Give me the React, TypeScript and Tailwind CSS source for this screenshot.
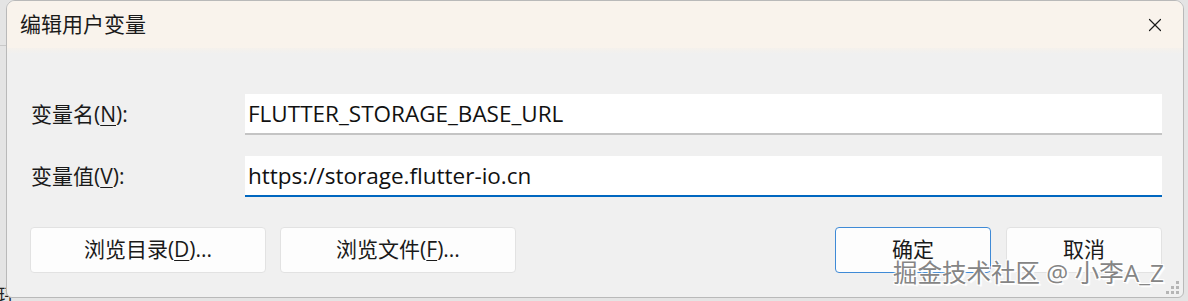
import { X } from 'lucide-react'

const font = '"Open Sans", "Noto Sans CJK SC", sans-serif'

function Field({ label, mnemonic, value, focused }: { label: string; mnemonic: string; value: string; focused?: boolean }) {
  return (
    <div className="flex items-center">
      <div className="w-[215px] text-[21px] text-[#1a1a1a] pl-[1px]">
        {label}(<span className="underline underline-offset-[3px] decoration-1">{mnemonic}</span>):
      </div>
      <div
        className={
          'flex-1 h-[41px] bg-white flex items-center pl-[3px] text-[22.5px] text-[#111] ' +
          (focused ? 'border-b-2 border-[#0067c0]' : 'border-b-2 border-[#c4c4c4]')
        }
      >
        {value}
      </div>
    </div>
  )
}

function Btn({ children, w, primary }: { children: React.ReactNode; w: string; primary?: boolean }) {
  return (
    <button
      className={
        'h-[46px] rounded-[4px] bg-[#fdfdfd] text-[21px] text-[#1a1a1a] flex items-center justify-center ' +
        w +
        (primary ? ' border border-[#3f8ad6]' : ' border border-[#e2e2e2]')
      }
    >
      {children}
    </button>
  )
}

export default function App() {
  return (
    <div className="w-[1188px] h-[301px] bg-[#e4e4e4] relative overflow-hidden" style={{ fontFamily: font }}>
      <div className="absolute left-0 top-[45px] w-[7px] h-px bg-[#c9c9c9]" />
      <div className="absolute left-[-2px] top-[286px] text-[18px] leading-none text-[#222]">玶</div>
      <div className="ml-[6px] w-[1178px] h-[298px] rounded-t-[9px] rounded-b-[6px] border border-[#b9b9b9] bg-[#f0f0f0] flex flex-col overflow-hidden relative">
        <div className="h-[47px] bg-[#f9f3ec] flex items-center justify-between pl-[13px] pr-[17px] shrink-0">
          <span className="text-[21px] text-[#1a1a1a] pt-[1px]">编辑用户变量</span>
          <X className="w-[22px] h-[22px] text-[#1c1c1c]" strokeWidth={1.3} />
        </div>
        <div className="h-[6px] bg-gradient-to-b from-[#f5f1ec] to-[#f0f0f0]" />
        <div className="flex flex-col gap-[21px] pl-[23px] pr-[21px] pt-[40px]">
          <Field label="变量名" mnemonic="N" value="FLUTTER_STORAGE_BASE_URL" />
          <Field label="变量值" mnemonic="V" value="https://storage.flutter-io.cn" focused />
        </div>
        <div className="flex items-center pl-[23px] pr-[21px] pt-[30px]">
          <div className="flex gap-[14px]">
            <Btn w="w-[236px]">
              浏览目录(<span className="underline underline-offset-[3px] decoration-1">D</span>)...
            </Btn>
            <Btn w="w-[236px]">
              浏览文件(<span className="underline underline-offset-[3px] decoration-1">F</span>)...
            </Btn>
          </div>
          <div className="flex gap-[15px] ml-auto">
            <Btn w="w-[156px]" primary>
              确定
            </Btn>
            <Btn w="w-[156px]">取消</Btn>
          </div>
        </div>
        <div className="absolute right-[4px] bottom-[3px] grid grid-cols-3 gap-[2px]">
          <span className="w-[3px] h-[3px]" />
          <span className="w-[3px] h-[3px]" />
          <span className="w-[3px] h-[3px] bg-[#b5b5b5]" />
          <span className="w-[3px] h-[3px]" />
          <span className="w-[3px] h-[3px] bg-[#b5b5b5]" />
          <span className="w-[3px] h-[3px] bg-[#b5b5b5]" />
          <span className="w-[3px] h-[3px] bg-[#b5b5b5]" />
          <span className="w-[3px] h-[3px] bg-[#b5b5b5]" />
          <span className="w-[3px] h-[3px] bg-[#b5b5b5]" />
        </div>
      </div>
      <div
        className="absolute left-[893px] top-[261px] text-[24.5px] leading-none text-[#858585] whitespace-nowrap"
        style={{ textShadow: '1px 1px 0 #fff, -1px -1px 0 #fff, 1px -1px 0 #fff, -1px 1px 0 #fff, 2px 2px 1px #fff' }}
      >
        掘金技术社区 @ 小李A_Z
      </div>
    </div>
  )
}
